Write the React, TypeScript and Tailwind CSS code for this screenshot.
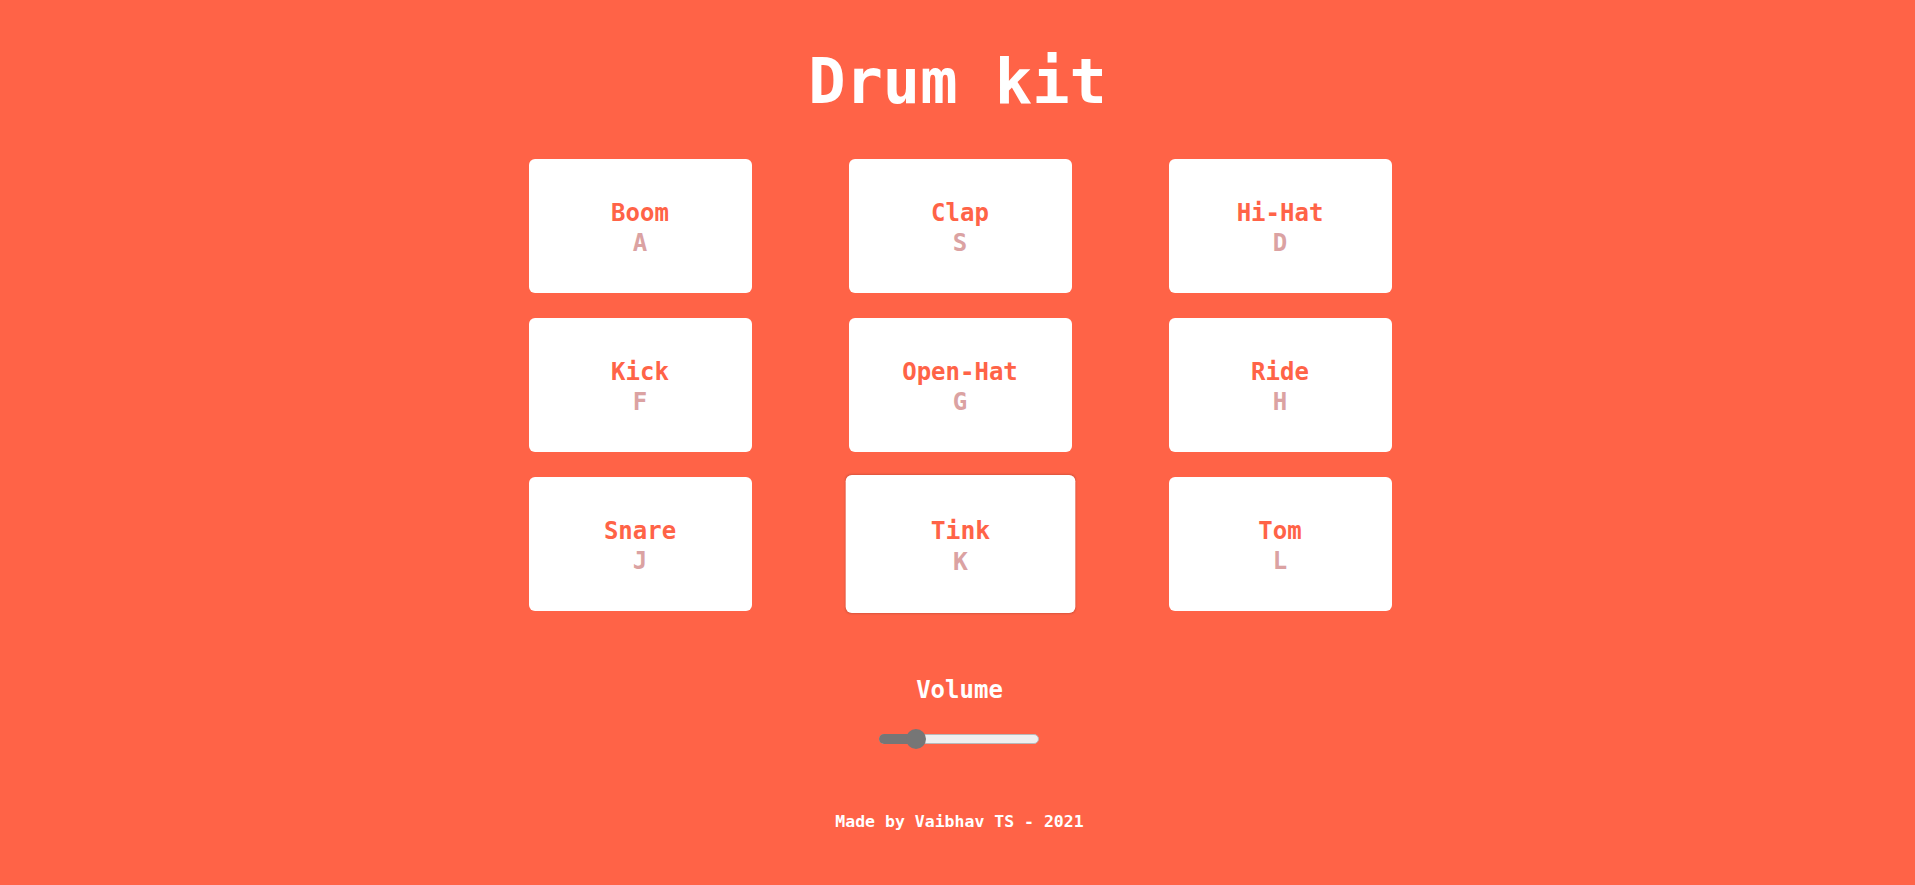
const pads = [
  { name: "Boom", key: "A" },
  { name: "Clap", key: "S" },
  { name: "Hi-Hat", key: "D" },
  { name: "Kick", key: "F" },
  { name: "Open-Hat", key: "G" },
  { name: "Ride", key: "H" },
  { name: "Snare", key: "J" },
  { name: "Tink", key: "K" },
  { name: "Tom", key: "L" },
];

const Pad = ({ name, keyName, active }: { name: string; keyName: string; active?: boolean }) => {
  return (
    <div
      className={
        active
          ? "flex h-[134px] w-[223px] scale-[1.03] flex-col items-center justify-center rounded-md bg-white shadow-[0_0_2px_rgba(0,0,0,0.15)]"
          : "flex h-[134px] w-[223px] flex-col items-center justify-center rounded-md bg-white"
      }
    >
      <div className="pt-[4px] text-[24px] leading-[30px] font-bold text-[#ff6347]">{name}</div>
      <div className="text-[24px] leading-[30px] font-bold text-[#dba2a2]">{keyName}</div>
    </div>
  );
};

const Volume = () => {
  const value = 0.2;
  return (
    <div className="relative flex h-5 w-40 items-center">
      <div className="h-[10px] w-full rounded-full border border-[#b9b9b9] bg-[#efefef]"></div>
      <div
        className="absolute left-0 top-[5px] h-[10px] rounded-full bg-[#767676]"
        style={{ width: `${value * 142 + 10}px` }}
      ></div>
      <div
        className="absolute top-0 h-5 w-5 rounded-full bg-[#767676]"
        style={{ left: `${value * 142 - 1}px` }}
      ></div>
    </div>
  );
};

export default function App() {
  return (
    <div
      className="flex min-h-screen flex-col items-center bg-[#ff6347] text-white"
      style={{ fontFamily: '"DejaVu Sans Mono", "Liberation Mono", monospace' }}
    >
      <h1 className="pt-[51px] text-[62px] leading-none font-bold">Drum kit</h1>
      <div className="mt-[46px] ml-[5px] grid grid-cols-3 gap-x-[97px] gap-y-[25px]">
        {pads.map((p) => (
          <Pad key={p.key} name={p.name} keyName={p.key} active={p.key === "K"} />
        ))}
      </div>
      <div className="mt-[67px] ml-[4px] text-[24px] leading-none font-bold">Volume</div>
      <div className="mt-[27px] ml-[3px]">
        <Volume />
      </div>
      <p className="mt-[65px] ml-[4px] text-[16.5px] leading-none font-bold">Made by Vaibhav TS - 2021</p>
    </div>
  );
}
